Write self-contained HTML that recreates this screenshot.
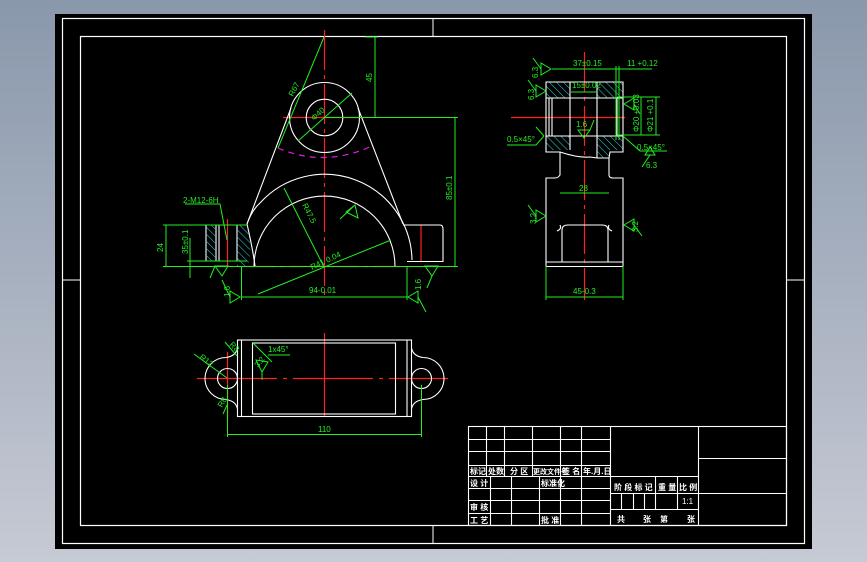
<!DOCTYPE html>
<html><head><meta charset="utf-8"><style>
html,body{margin:0;padding:0;width:867px;height:562px;overflow:hidden;background:linear-gradient(#8a98ac,#c6cad4);}
svg{position:absolute;left:0;top:0}
text{font-family:"Liberation Sans","Noto Sans CJK SC",sans-serif}
</style></head><body>
<svg width="867" height="562" viewBox="0 0 867 562">
<defs>
<pattern id="h" width="5" height="5" patternUnits="userSpaceOnUse" patternTransform="rotate(-45)"><line x1="0" y1="0" x2="0" y2="5" stroke="#2ad4e0" stroke-width="1"/></pattern>
</defs>
<rect x="55" y="14" width="757" height="535" fill="#000"/>
<g fill="none" stroke="#fff" stroke-width="1.2">
<rect x="62.5" y="18.5" width="742" height="525"/>
<rect x="80.5" y="36.5" width="706" height="489"/>
</g>
<!-- frame ticks -->
<g stroke="#fff" stroke-width="1"><line x1="433" y1="18" x2="433" y2="36"/><line x1="433" y1="525" x2="433" y2="543"/><line x1="62" y1="280" x2="80" y2="280"/><line x1="786" y1="280" x2="804" y2="280"/></g>

<!-- FRONT VIEW -->
<g stroke="#ff2020" stroke-width="1.2" fill="none">
<line x1="324.5" y1="30" x2="324.5" y2="300" stroke-dasharray="40,5,4,5"/>
<line x1="283" y1="117.5" x2="365" y2="117.5"/>
<line x1="247" y1="266.5" x2="400" y2="266.5" stroke-dasharray="28,5,4,5"/>
<line x1="227.5" y1="219" x2="227.5" y2="266"/>
<line x1="421" y1="225" x2="421" y2="262"/>
</g>
<g stroke="#fff" stroke-width="1.1" fill="none">
<circle cx="324.5" cy="117.5" r="35"/>
<circle cx="324.5" cy="117.5" r="18.3"/>
<line x1="291" y1="108" x2="247" y2="224"/>
<line x1="358" y1="108" x2="403" y2="224"/>
<path d="M247,224 Q252,210 260,203 A87.3,87.3 0 0 1 412,260"/>
<path d="M254,266.5 A70,70 0 0 1 395,266.5"/>
<path d="M247,224 Q253,250 255,266"/>
<path d="M403,225 L440,225 Q443,225 443,229 L443,261.5 L407,261.5"/>
<line x1="206" y1="225" x2="206" y2="261"/><line x1="216" y1="225" x2="216" y2="261"/><line x1="219" y1="225" x2="219" y2="261"/><line x1="237" y1="225" x2="237" y2="261"/>
</g>
<rect x="206" y="225" width="10" height="36" fill="url(#h)"/>
<path d="M237,225 L247,225 Q253,245 248,266 L237,266 Z" fill="url(#h)"/>
<path d="M278,148 Q324,168 372,146" stroke="#e020e0" stroke-width="1.2" fill="none" stroke-dasharray="6,5"/>
<g stroke="#22ee22" stroke-width="1" fill="none">
<line x1="163" y1="266.5" x2="458" y2="266.5"/>
<line x1="324" y1="117.5" x2="458" y2="117.5"/>
<line x1="365" y1="37" x2="378" y2="37"/>
<line x1="375" y1="37" x2="375" y2="117"/>
<line x1="455" y1="117" x2="455" y2="267"/>
<line x1="163" y1="225" x2="247" y2="225"/>
<line x1="187" y1="261" x2="247" y2="261"/>
<line x1="166" y1="225" x2="166" y2="267"/>
<line x1="190" y1="238" x2="190" y2="278"/>
<line x1="241.5" y1="267" x2="241.5" y2="300"/><line x1="407" y1="267" x2="407" y2="300"/>
<line x1="241.5" y1="297" x2="407" y2="297"/>
<line x1="324" y1="37" x2="278" y2="148"/>
<line x1="298" y1="141" x2="352" y2="93"/>
<line x1="284" y1="188" x2="324" y2="267"/>
<line x1="258" y1="294" x2="391" y2="240"/>
<path d="M185,204 L220,204 L227,240"/>
<path d="M215,266 L222,276 L228,266 Z M215,266 L210,278"/>
<path d="M425,266 L432,276 L438,266 Z M432,276 L427,288"/>
<path d="M240,297 L230,291 L230,303 Z M230,297 L222,280"/>
<path d="M408,297 L418,291 L418,303 Z M418,297 L426,312"/>
<path d="M355,205 L358,218 L346,212 Z M355,205 L340,219"/>
</g>
<g fill="#22ee22" font-size="8">
<text x="183" y="203">2-M12-6H</text>
<text transform="translate(372,82) rotate(-90)">45</text>
<text transform="translate(452,200) rotate(-90)">85±0.1</text>
<text transform="translate(163,252) rotate(-90)">24</text>
<text transform="translate(188,254) rotate(-90)">35±0.1</text>
<text x="309" y="293">94-0.01</text>
<text transform="translate(293,97) rotate(-62)">R67</text>
<text transform="translate(314,121) rotate(-42)">Φ40</text>
<text transform="translate(302,205) rotate(63)">R47.5</text>
<text transform="translate(312,270) rotate(-25)">R41 0.04</text>
<text transform="translate(230,297) rotate(-90)">1.6</text>
<text transform="translate(421,290) rotate(-90)">1.6</text>
</g>

<!-- SIDE VIEW -->
<g stroke="#ff2020" stroke-width="1.2" fill="none">
<line x1="584.5" y1="52" x2="584.5" y2="300" stroke-dasharray="40,5,4,5"/>
<line x1="511" y1="117.5" x2="625" y2="117.5"/>
</g>
<rect x="546" y="82" width="24" height="16" fill="url(#h)"/>
<rect x="597" y="82" width="26" height="16" fill="url(#h)"/>
<rect x="546" y="136" width="24" height="14" fill="url(#h)"/>
<path d="M597,136 L623,136 L623,150 L610,150 L609,158 L597,158 Z" fill="url(#h)"/>
<g stroke="#fff" stroke-width="1.1" fill="none">
<path d="M546,82 L623,82 L623,152 L610,152 L609,158 L597,158 L590,157 Q578,158 560,152 L546,152 Z"/>
<line x1="546" y1="98" x2="623" y2="98"/><line x1="546" y1="136" x2="623" y2="136"/>
<line x1="570" y1="82" x2="570" y2="150"/><line x1="597" y1="82" x2="597" y2="158"/>
<line x1="549" y1="98" x2="549" y2="136"/><line x1="552" y1="98" x2="552" y2="136"/><line x1="617" y1="98" x2="617" y2="136"/>
<path d="M560,152 L560,175 Q558,178 555,178 L546,178 L546,266.5 L623,266.5 L623,178 L613,178 Q609,178 609,175 L609,158"/>
<path d="M562,262 L562,230 Q562,225 568,225 L602,225 Q608,225 608,230 L608,262"/>
<path d="M560,225 Q562,229 557,231 M609,225 Q607,229 612,231"/>
<line x1="546" y1="262" x2="623" y2="262"/>
</g>
<g stroke="#22ee22" stroke-width="1" fill="none">
<line x1="552" y1="69" x2="652" y2="69"/>
<line x1="571" y1="92" x2="597" y2="92"/>
<line x1="617" y1="97" x2="660" y2="97"/><line x1="617" y1="135" x2="660" y2="135"/>
<line x1="641" y1="97" x2="641" y2="135"/><line x1="656" y1="97" x2="656" y2="135"/>
<line x1="560" y1="193" x2="609" y2="193"/>
<line x1="546" y1="266" x2="546" y2="300"/><line x1="623" y1="266" x2="623" y2="300"/>
<line x1="546" y1="297" x2="623" y2="297"/>
<line x1="616" y1="66" x2="616" y2="140"/><line x1="619" y1="66" x2="619" y2="140"/>
<path d="M551,69 L541,63 L541,75 Z M541,69 L533,58"/>
<path d="M546,91 L536,85 L536,97 Z M536,91 L528,80"/>
<path d="M544,136 L536,127 M544,136 L536,145 L507,145"/>
<path d="M624,104 L634,98 L634,110 Z M634,104 L640,114"/>
<path d="M623,136 L640,151 L667,151"/>
<path d="M650,147 L645,155 L655,155 Z M650,155 L642,167"/>
<path d="M578,130 L584,138 L590,130 Z M590,130 L594,120"/>
<path d="M546,216 L536,210 L536,222 Z M536,216 L528,205"/>
<path d="M624,225 L634,219 L634,231 Z M634,225 L642,236"/>
</g>
<g fill="#22ee22" font-size="8">
<text x="573" y="66">37±0.15</text>
<text x="627" y="66">11 +0.12</text>
<text x="572" y="88">15±0.02</text>
<text transform="translate(538,78) rotate(-90)">6.3</text>
<text transform="translate(534,100) rotate(-90)">6.3</text>
<text x="507" y="142">0.5×45°</text>
<text x="637" y="150">0.5×45°</text>
<text x="576" y="127">1.6</text>
<text transform="translate(639,132) rotate(-90)">Φ20 +0.03</text>
<text transform="translate(653,132) rotate(-90)">Φ21 +0.1</text>
<text x="579" y="191">28</text>
<text x="573" y="294">45-0.3</text>
<text transform="translate(536,224) rotate(-90)">3.2</text>
<text transform="translate(638,232) rotate(-90)">3.2</text>
<text x="646" y="168">6.3</text>
</g>

<!-- TOP VIEW -->
<g stroke="#ff2020" stroke-width="1.2" fill="none">
<line x1="197" y1="378.5" x2="448" y2="378.5" stroke-dasharray="80,6,4,6"/>
<line x1="324.5" y1="333" x2="324.5" y2="416"/>
<line x1="227.5" y1="352" x2="227.5" y2="420"/>
</g>
<g stroke="#fff" stroke-width="1.1" fill="none">
<rect x="237.5" y="340" width="174" height="76.5"/>
<rect x="252.5" y="343" width="143" height="71"/>
<line x1="241.5" y1="340" x2="241.5" y2="416.5"/><line x1="407" y1="340" x2="407" y2="416.5"/>
<circle cx="227.5" cy="378.5" r="10"/><circle cx="421.5" cy="378.5" r="10"/>
<path d="M237.5,348 Q236,356 226,357.5 A21,21 0 0 0 226,399.5 Q236,401 237.5,409"/>
<path d="M411.5,348 Q413,356 423,357.5 A21,21 0 0 1 423,399.5 Q413,401 411.5,409"/>
</g>
<g stroke="#22ee22" stroke-width="1" fill="none">
<line x1="227.5" y1="385" x2="227.5" y2="437"/><line x1="421.5" y1="385" x2="421.5" y2="437"/>
<line x1="227.5" y1="434.5" x2="421.5" y2="434.5"/>
<line x1="194" y1="354" x2="227" y2="378"/>
<line x1="225" y1="342" x2="237" y2="356"/>
<line x1="253" y1="343" x2="272" y2="362"/><line x1="268" y1="355" x2="290" y2="355"/>
<path d="M268,362 L256,360 L262,372 Z M262,372 L262,380"/>
<path d="M227,405 L223,414"/>
</g>
<g fill="#22ee22" font-size="8">
<text x="318" y="432">110</text>
<text x="268" y="352">1x45°</text>
<text transform="translate(199,358) rotate(38)">R12</text>
<text transform="translate(229,345) rotate(45)">R8</text>
<text transform="translate(222,408) rotate(-60)">R8</text>
<text transform="translate(258,368) rotate(-50)">3.2</text>
</g>

<!-- TITLE BLOCK -->
<g stroke="#fff" stroke-width="1.1" fill="none">
<rect x="468.5" y="426.5" width="318" height="99"/>
<line x1="468.5" y1="439.5" x2="610.5" y2="439.5"/>
<line x1="468.5" y1="451.5" x2="610.5" y2="451.5"/>
<line x1="468.5" y1="465.5" x2="610.5" y2="465.5"/>
<line x1="468.5" y1="476.5" x2="698.5" y2="476.5"/>
<line x1="468.5" y1="488.5" x2="610.5" y2="488.5"/>
<line x1="468.5" y1="500.5" x2="610.5" y2="500.5"/>
<line x1="468.5" y1="513.5" x2="610.5" y2="513.5"/>
<line x1="610.5" y1="493.5" x2="786.5" y2="493.5"/>
<line x1="610.5" y1="509.5" x2="698.5" y2="509.5"/>
<line x1="698.5" y1="458.5" x2="786.5" y2="458.5"/>
<line x1="610.5" y1="426.5" x2="610.5" y2="525.5"/>
<line x1="698.5" y1="426.5" x2="698.5" y2="525.5"/>
<line x1="486.5" y1="426.5" x2="486.5" y2="476.5"/>
<line x1="504.5" y1="426.5" x2="504.5" y2="476.5"/>
<line x1="532.5" y1="426.5" x2="532.5" y2="476.5"/>
<line x1="560.5" y1="426.5" x2="560.5" y2="525.5"/>
<line x1="581.5" y1="426.5" x2="581.5" y2="525.5"/>
<line x1="490.5" y1="476.5" x2="490.5" y2="525.5"/>
<line x1="511.5" y1="476.5" x2="511.5" y2="525.5"/>
<line x1="539.5" y1="476.5" x2="539.5" y2="525.5"/>
<line x1="621.5" y1="493.5" x2="621.5" y2="509.5"/>
<line x1="633.5" y1="493.5" x2="633.5" y2="509.5"/>
<line x1="644.5" y1="493.5" x2="644.5" y2="509.5"/>
<line x1="655.5" y1="476.5" x2="655.5" y2="509.5"/>
<line x1="677.5" y1="476.5" x2="677.5" y2="509.5"/>
</g>
<g fill="#fff" font-size="8" font-weight="bold">
<text x="470" y="474">标记</text><text x="488" y="474">处数</text><text x="510" y="474">分 区</text><text x="533" y="474" font-size="7">更改文件号</text><text x="562" y="474">签 名</text><text x="583" y="474">年.月.日</text>
<text x="470" y="486">设 计</text><text x="541" y="486">标准化</text>
<text x="470" y="510">审 核</text>
<text x="470" y="523">工 艺</text><text x="541" y="523">批 准</text>
<text x="614" y="490">阶 段 标 记</text><text x="658" y="490">重 量</text><text x="679" y="490">比 例</text>
<text x="682" y="504" font-weight="normal">1:1</text>
<text x="617" y="522">共</text><text x="643" y="522">张</text><text x="660" y="522">第</text><text x="687" y="522">张</text>
</g>
</svg>
</body></html>
